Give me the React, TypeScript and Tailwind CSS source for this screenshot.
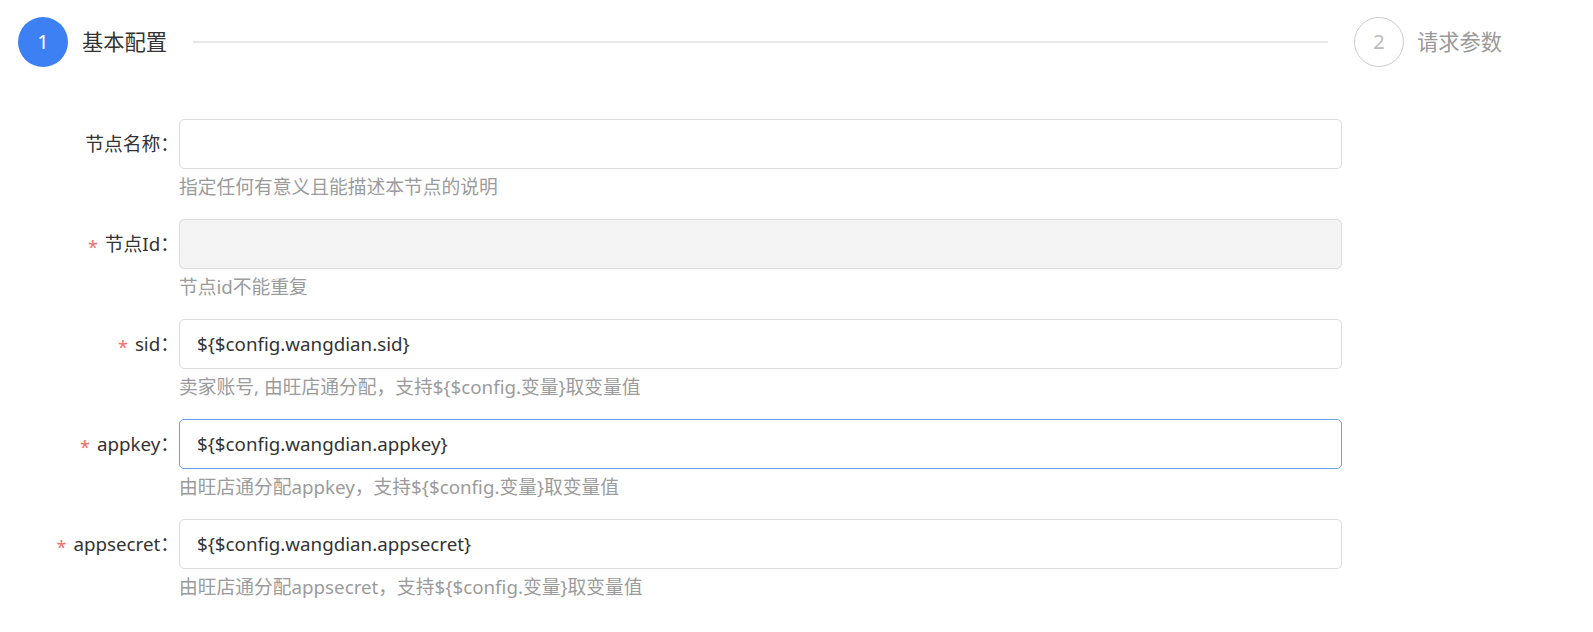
const font = { fontFamily: '"Noto Sans", "Noto Sans CJK SC", sans-serif' };

interface Field {
    label: string;
    required?: boolean;
    value?: string;
    hint: string;
    disabled?: boolean;
    focused?: boolean;
}

const fields: Field[] = [
    { label: '节点名称', hint: '指定任何有意义且能描述本节点的说明' },
    { label: '节点Id', required: true, disabled: true, hint: '节点id不能重复' },
    { label: 'sid', required: true, value: '${$config.wangdian.sid}', hint: '卖家账号, 由旺店通分配，支持${$config.变量}取变量值' },
    { label: 'appkey', required: true, value: '${$config.wangdian.appkey}', hint: '由旺店通分配appkey，支持${$config.变量}取变量值', focused: true },
    { label: 'appsecret', required: true, value: '${$config.wangdian.appsecret}', hint: '由旺店通分配appsecret，支持${$config.变量}取变量值' },
];

function FormRow({ field }: { field: Field }) {
    const border = field.focused ? 'border-[#6b9ff5]' : 'border-[#dcdcdc]';
    const bg = field.disabled ? 'bg-[#f4f4f4]' : 'bg-white';
    return (
        <div className="flex">
            <div className="w-[179px] h-[50px] flex items-center justify-end text-[18.75px] text-[#333]">
                {field.required && (
                    <span className="text-[#f56c6c] mr-[7px] text-[18px] leading-none translate-y-[3px]">*</span>
                )}
                <span>{field.label}：</span>
            </div>
            <div className="w-[1163px]">
                <div className={`h-[50px] rounded-[5px] border ${border} ${bg} px-[17px] flex items-center text-[18.75px] text-[#333]`}>
                    {field.value}
                </div>
                <div className="mt-[6px] h-[24px] leading-[24px] text-[18.75px] text-[#9b9b9b]">{field.hint}</div>
            </div>
        </div>
    );
}

export default function App() {
    return (
        <div className="w-[1593px] h-[632px] bg-white" style={font}>
            <div className="flex items-center pl-[18px] pr-[91px] pt-[17px]">
                <div className="w-[50px] h-[50px] rounded-full bg-[#3d80f4] text-white text-[20px] flex items-center justify-center">1</div>
                <span className="ml-[14px] text-[21.25px] text-[#333]">基本配置</span>
                <div className="flex-1 h-[2px] bg-[#e6e6e6] mx-[26px]" />
                <div className="w-[50px] h-[50px] rounded-full border border-[#cccccc] text-[#bbb] text-[20px] flex items-center justify-center">2</div>
                <span className="ml-[13px] text-[21.25px] text-[#999]">请求参数</span>
            </div>
            <div className="mt-[52px] flex flex-col gap-[20px]">
                {fields.map((f) => (
                    <FormRow key={f.label} field={f} />
                ))}
            </div>
        </div>
    );
}
